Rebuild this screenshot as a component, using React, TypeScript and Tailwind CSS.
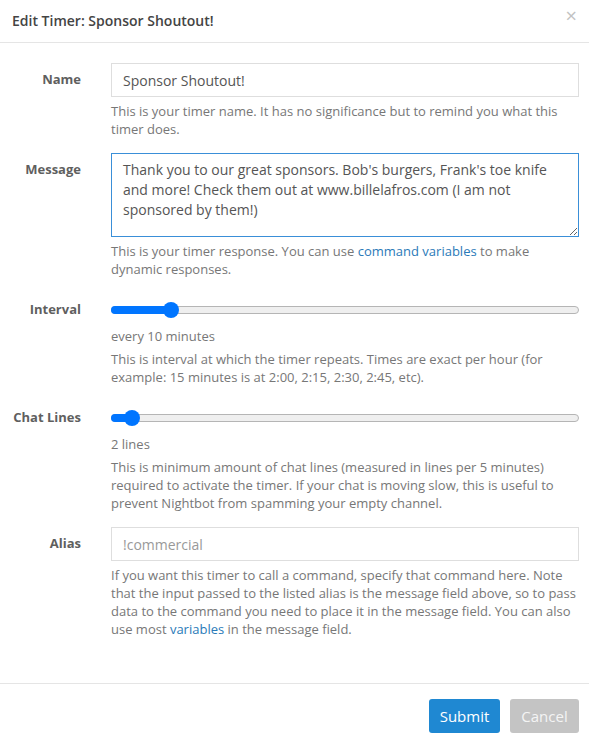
import React from "react";

function Slider({ offset }: { offset: number }) {
  return (
    <div className="h-[34px] flex items-center">
      <div className="relative w-full h-[8px] rounded-full bg-[#efefef] border border-[#b5b5b5]">
        <div
          className="absolute left-[-1px] top-[-1px] h-[8px] rounded-full bg-[#0075ff]"
          style={{ width: offset }}
        />
        <div
          className="absolute top-1/2 w-[16px] h-[16px] -translate-y-1/2 -translate-x-1/2 rounded-full bg-[#0075ff]"
          style={{ left: offset }}
        />
      </div>
    </div>
  );
}

function Row({ label, children }: { label: string; children: React.ReactNode }) {
  return (
    <div className="flex mb-[15px]">
      <label className="w-[81px] shrink-0 pt-[7px] text-right text-[13px] leading-[18px] font-bold text-[#5f5f5f]">
        {label}
      </label>
      <div className="ml-[30px] flex-1 min-w-0">{children}</div>
    </div>
  );
}

function Help({ children }: { children: React.ReactNode }) {
  return <p className="mt-[5px] text-[13px] leading-[18px] text-[#777]">{children}</p>;
}

export default function App() {
  return (
    <div className="w-[589px] h-[740px] overflow-hidden bg-white" style={{ fontFamily: "'Open Sans', sans-serif" }}>
      {/* Header */}
      <div className="h-[43px] border-b border-[#e5e5e5] flex items-center justify-between pl-[12px] pr-[12px]">
        <h4 className="text-[14px] font-semibold text-[#444] pb-[2px]">Edit Timer: Sponsor Shoutout!</h4>
        <button className="text-[20px] leading-none text-[#c2c2c2] pb-[10px]">×</button>
      </div>

      {/* Body */}
      <div className="pt-[20px] pb-[30px] pr-[10px]">
        <Row label="Name">
          <input
            className="w-full h-[34px] border border-[#dedede] px-[11px] text-[14px] text-[#555] outline-none"
            defaultValue="Sponsor Shoutout!"
          />
          <Help>This is your timer name. It has no significance but to remind you what this timer does.</Help>
        </Row>

        <Row label="Message">
          <textarea
            className="block w-full h-[84px] border border-[#3a8fd8] px-[11px] py-[6px] text-[14px] leading-[20px] text-[#555] outline-none"
            defaultValue="Thank you to our great sponsors. Bob's burgers, Frank's toe knife and more! Check them out at www.billelafros.com (I am not sponsored by them!)"
          />
          <Help>
            This is your timer response. You can use{" "}
            <a className="text-[#2a7ab8]">command variables</a> to make dynamic responses.
          </Help>
        </Row>

        <Row label="Interval">
          <Slider offset={59} />
          <div className="text-[13px] leading-[18px] text-[#777]">every 10 minutes</div>
          <Help>
            This is interval at which the timer repeats. Times are exact per hour (for example: 15 minutes is at 2:00,
            2:15, 2:30, 2:45, etc).
          </Help>
        </Row>

        <Row label="Chat Lines">
          <Slider offset={20} />
          <div className="text-[13px] leading-[18px] text-[#777]">2 lines</div>
          <Help>
            This is minimum amount of chat lines (measured in lines per 5 minutes) required to activate the timer. If
            your chat is moving slow, this is useful to prevent Nightbot from spamming your empty channel.
          </Help>
        </Row>

        <Row label="Alias">
          <input
            className="w-full h-[34px] border border-[#dedede] px-[11px] text-[14px] text-[#555] placeholder:text-[#999] outline-none"
            placeholder="!commercial"
          />
          <Help>
            If you want this timer to call a command, specify that command here. Note that the input passed to the
            listed alias is the message field above, so to pass data to the command you need to place it in the
            message field. You can also use most <a className="text-[#2a7ab8]">variables</a> in the message field.
          </Help>
        </Row>
      </div>

      {/* Footer */}
      <div className="border-t border-[#e5e5e5] pt-[15px] pr-[10px] flex justify-end gap-[10px]">
        <button className="w-[71px] h-[34px] rounded-[3px] bg-[#1f88d2] text-white text-[15px]">Submit</button>
        <button className="w-[69px] h-[34px] rounded-[3px] bg-[#c4c4c4] text-[#f4f4f4] text-[15px]">Cancel</button>
      </div>
    </div>
  );
}
